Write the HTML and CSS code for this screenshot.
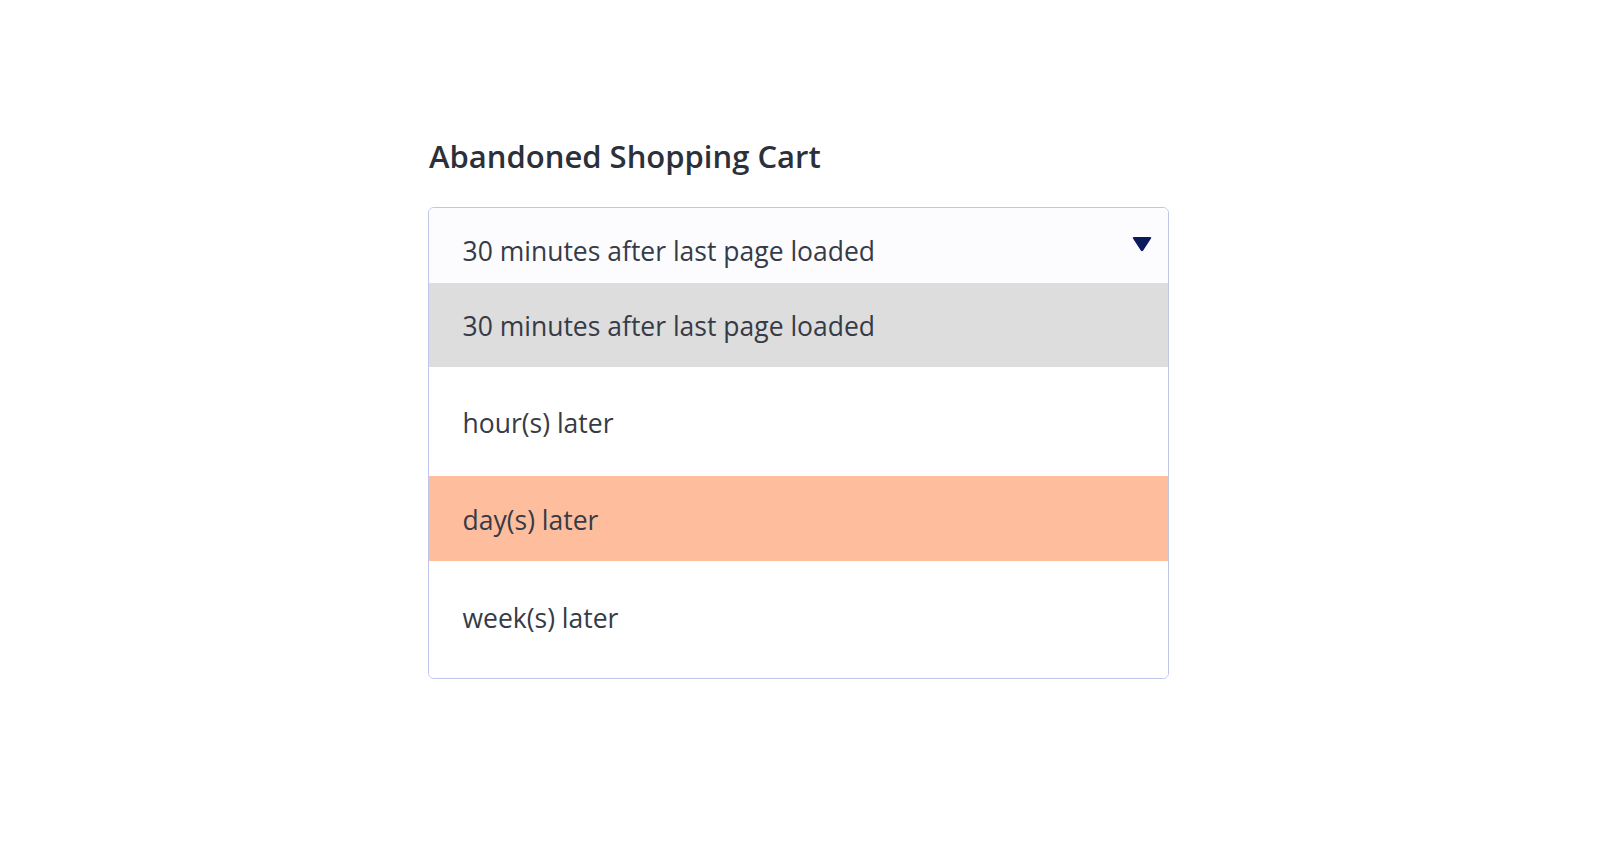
FILE: index.html
```html
<!DOCTYPE html>
<html lang="en">
<head>
    <meta charset="UTF-8">
    <title>Abandoned Shopping Cart</title>
    <link rel="stylesheet" href="styles.css">
</head>
<body>
<div class="page">
    <h2 class="title">Abandoned Shopping Cart</h2>
    <div class="select">
        <div class="select-current">
            <span>30 minutes after last page loaded</span>
            <svg class="caret" width="20" height="15" viewBox="0 0 20 15"><path d="M1 1.5 Q0 0 2 0 H18 Q20 0 19 1.5 L11.2 13.6 Q10 15 8.8 13.6 Z" fill="#0c1a5c"/></svg>
        </div>
        <div class="option option-selected">30 minutes after last page loaded</div>
        <div class="option option-hour">hour(s) later</div>
        <div class="option option-hover">day(s) later</div>
        <div class="option option-week">week(s) later</div>
    </div>
</div>
</body>
</html>
```

FILE: styles.css
```css
body {
    margin: 0;
    padding: 0;
    background: #ffffff;
    font-family: "Open Sans", "Noto Sans", sans-serif;
    color: #363b47;
}

.page {
    width: 741px;
    margin: 0 0 0 428px;
    padding-top: 135px;
}

.title {
    margin: 0 0 30px 1px;
    font-size: 31px;
    font-weight: 600;
    line-height: 42px;
    color: #2b303b;
}

.select {
    border: 1.5px solid #bfc6ea;
    border-radius: 6px;
    overflow: hidden;
    font-size: 26.5px;
    line-height: 36px;
}

.select-current {
    display: flex;
    align-items: flex-start;
    justify-content: space-between;
    height: 74.5px;
    box-sizing: border-box;
    padding: 25px 16px 0 33.5px;
    background: #fcfcff;
}

.caret {
    margin-top: 4px;
}

.option {
    box-sizing: border-box;
    padding: 0 33.5px;
}

.option-selected {
    height: 84.5px;
    padding-top: 25px;
    background: #dddddd;
}

.option-hour {
    height: 109px;
    padding-top: 38px;
    background: #ffffff;
}

.option-hover {
    height: 84.5px;
    padding-top: 26px;
    background: #febe9e;
}

.option-week {
    height: 117px;
    padding-top: 39px;
    background: #ffffff;
}
```
